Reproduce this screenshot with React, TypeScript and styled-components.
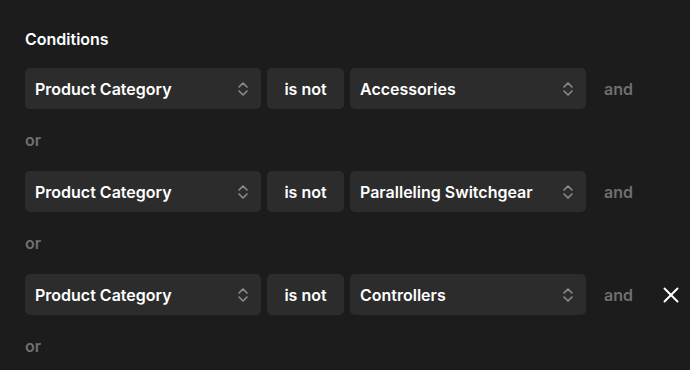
import React from 'react';
import styled, { createGlobalStyle } from 'styled-components';
import { X } from 'lucide-react';

const GlobalStyle = createGlobalStyle`
  html, body {
    margin: 0;
    padding: 0;
    background-color: #1c1c1c;
  }
`;

const Page = styled.div`
  min-height: 370px;
  background-color: #1c1c1c;
  color: #ffffff;
  font-family: Inter, 'Noto Sans', sans-serif;
  padding: 29px 25px 0;
  box-sizing: border-box;
`;

const Title = styled.h2`
  margin: 0 0 18px;
  font-size: 16px;
  line-height: 21px;
  font-weight: 600;
  color: #ffffff;
`;

const Row = styled.div`
  display: flex;
  align-items: center;
  gap: 6px;
  height: 41px;
`;

const Select = styled.div<{ $width: number }>`
  flex-shrink: 0;
  width: ${p => p.$width}px;
  height: 41px;
  box-sizing: border-box;
  background-color: #2c2c2c;
  border-radius: 5px;
  display: flex;
  align-items: center;
  justify-content: space-between;
  padding: 0 12px 0 10px;
  font-size: 16px;
  font-weight: 600;
  color: #ffffff;
`;

const Operator = styled.div`
  flex-shrink: 0;
  width: 77px;
  height: 41px;
  background-color: #2c2c2c;
  border-radius: 5px;
  display: flex;
  align-items: center;
  justify-content: center;
  font-size: 16px;
  font-weight: 600;
  color: #ffffff;
`;

const Joiner = styled.span`
  font-size: 16px;
  font-weight: 600;
  color: #6f6f6f;
`;

const AndLabel = styled(Joiner)`
  flex-shrink: 0;
  margin-left: 12px;
  width: 48px;
`;

const OrLabel = styled(Joiner)`
  display: block;
  height: 62px;
  line-height: 62px;
`;

const RemoveButton = styled.button`
  flex-shrink: 0;
  background: transparent;
  border: none;
  padding: 0;
  color: #ffffff;
  display: flex;
  align-items: center;
  cursor: pointer;
`;

const Chevrons = () => (
  <svg width="12" height="16" viewBox="0 0 12 16" fill="none" stroke="#8c8c8c" strokeWidth="1.6" strokeLinecap="round" strokeLinejoin="round">
    <path d="M2 6 L6 2 L10 6" />
    <path d="M2 10 L6 14 L10 10" />
  </svg>
);

const conditions = [
  { field: 'Product Category', op: 'is not', value: 'Accessories', removable: false },
  { field: 'Product Category', op: 'is not', value: 'Paralleling Switchgear', removable: false },
  { field: 'Product Category', op: 'is not', value: 'Controllers', removable: true },
];

export default function App() {
  return (
    <>
      <GlobalStyle />
      <Page>
        <Title>Conditions</Title>
        {conditions.map((c, i) => (
          <div key={i}>
            <Row>
              <Select $width={236}>
                <span>{c.field}</span>
                <Chevrons />
              </Select>
              <Operator>{c.op}</Operator>
              <Select $width={236}>
                <span>{c.value}</span>
                <Chevrons />
              </Select>
              <AndLabel>and</AndLabel>
              {c.removable && (
                <RemoveButton aria-label="Remove">
                  <X size={26} strokeWidth={1.8} />
                </RemoveButton>
              )}
            </Row>
            <OrLabel>or</OrLabel>
          </div>
        ))}
      </Page>
    </>
  );
}
